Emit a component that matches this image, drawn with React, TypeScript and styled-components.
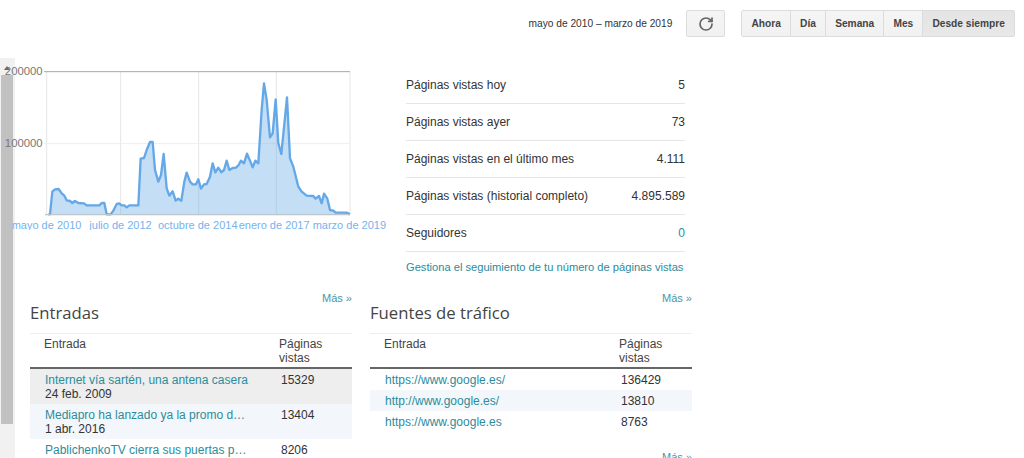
import React from 'react'
import styled, { createGlobalStyle } from 'styled-components'
import { RotateCw } from 'lucide-react'

const GlobalStyle = createGlobalStyle`
  html, body {
    margin: 0;
    padding: 0;
    background: #fff;
  }
  body {
    font-family: "Liberation Sans", Arial, sans-serif;
    font-size: 12px;
    color: #333;
  }
`

const RANGES = ['Ahora', 'Día', 'Semana', 'Mes', 'Desde siempre']

const STATS = [
  { label: 'Páginas vistas hoy', value: '5' },
  { label: 'Páginas vistas ayer', value: '73' },
  { label: 'Páginas vistas en el último mes', value: '4.111' },
  { label: 'Páginas vistas (historial completo)', value: '4.895.589' },
  { label: 'Seguidores', value: '0', link: true },
]

const POSTS = [
  { title: 'Internet vía sartén, una antena casera', date: '24 feb. 2009', views: '15329', tone: 'hover' },
  { title: 'Mediapro ha lanzado ya la promo d…', date: '1 abr. 2016', views: '13404', tone: 'alt' },
  { title: 'PablichenkoTV cierra sus puertas p…', date: '', views: '8206', tone: 'plain' },
] as const

const SOURCES = [
  { title: 'https://www.google.es/', views: '136429', tone: 'plain' },
  { title: 'http://www.google.es/', views: '13810', tone: 'alt' },
  { title: 'https://www.google.es', views: '8763', tone: 'plain' },
] as const

// traced off the graph, in a 3x coordinate space
const LINE =
  '145,493 150,493 157,425 165,418 176,417 185,430 193,437 200,451 210,453 217,459 225,453 235,459 252,460 260,466 298,466 305,459 313,459 320,493 332,493 340,482 350,462 356,460 365,466 373,466 380,472 388,466 415,466 422,326 432,324 440,300 450,276 458,276 465,360 475,395 483,375 491,312 500,415 508,437 518,424 527,452 535,446 544,452 553,395 560,368 570,395 578,403 588,403 595,388 603,416 612,403 620,402 630,380 638,340 646,367 655,353 664,367 672,360 680,332 688,360 698,354 708,353 716,345 723,332 732,340 741,311 750,332 758,352 766,332 775,340 785,180 792,100 800,150 810,262 818,250 827,148 835,280 844,312 861,142 870,325 880,350 895,410 905,425 920,437 940,438 947,446 957,438 965,460 972,431 982,446 990,480 1000,482 1007,488 1040,488 1050,493'

const X_LABELS = [
  { x: 35, text: 'mayo de 2010' },
  { x: 268, text: 'julio de 2012' },
  { x: 474, text: 'octubre de 2014' },
  { x: 716, text: 'enero de 2017' },
  { x: 938, text: 'marzo de 2019' },
]

function TrafficChart() {
  return (
    <ChartSvg viewBox="0 0 1200 540">
      {[140, 362, 596, 829, 1050].map((x) => (
        <line key={x} x1={x} x2={x} y1={65} y2={494} stroke="#e6e6e6" strokeWidth={3} />
      ))}
      <line x1={132} x2={1050} y1={281} y2={281} stroke="#eeeeee" strokeWidth={3} />
      <polygon points={`145,494 ${LINE} 1050,494`} fill="#64a8e8" fillOpacity={0.38} />
      <polyline points={LINE} fill="none" stroke="#64a8e8" strokeWidth={7} strokeLinejoin="round" />
      <line x1={132} x2={1050} y1={65} y2={65} stroke="#a8a8a8" strokeWidth={3} />
      <line x1={135} x2={1050} y1={494} y2={494} stroke="#bcc4cc" strokeWidth={4} />
      <AxisText x={128} y={76} textAnchor="end">200000</AxisText>
      <AxisText x={128} y={292} textAnchor="end">100000</AxisText>
      {X_LABELS.map((l) => (
        <DateText key={l.x} x={l.x} y={536}>
          {l.text}
        </DateText>
      ))}
    </ChartSvg>
  )
}

export default function App() {
  return (
    <Page>
      <GlobalStyle />
      <Rail>
        <RailArrow />
        <RailThumb />
      </Rail>

      <TopBar>
        <RangeText>mayo de 2010 – marzo de 2019</RangeText>
        <RefreshBtn aria-label="Actualizar">
          <RotateCw size={16} strokeWidth={2.6} color="#666" />
        </RefreshBtn>
        <BtnGroup>
          {RANGES.map((r) => (
            <RangeBtn key={r} $active={r === 'Desde siempre'}>
              {r}
            </RangeBtn>
          ))}
        </BtnGroup>
      </TopBar>

      <Overview>
        <TrafficChart />
        <Stats>
          {STATS.map((s) => (
            <StatRow key={s.label}>
              <span>{s.label}</span>
              {s.link ? <Link>{s.value}</Link> : <span>{s.value}</span>}
            </StatRow>
          ))}
          <ManageLink>Gestiona el seguimiento de tu número de páginas vistas</ManageLink>
        </Stats>
      </Overview>

      <Panels>
        <Panel>
          <MoreLink>Más »</MoreLink>
          <PanelTitle>Entradas</PanelTitle>
          <DataTable>
            <TableHead />
            <tbody>
              {POSTS.map((p) => (
                <BodyRow key={p.title} $tone={p.tone}>
                  <TitleCell>
                    <Link>{p.title}</Link>
                    {p.date && <DateLine>{p.date}</DateLine>}
                  </TitleCell>
                  <ViewsCell>{p.views}</ViewsCell>
                </BodyRow>
              ))}
            </tbody>
          </DataTable>
        </Panel>

        <Panel>
          <MoreLink>Más »</MoreLink>
          <PanelTitle>Fuentes de tráfico</PanelTitle>
          <DataTable>
            <TableHead />
            <tbody>
              {SOURCES.map((s) => (
                <BodyRow key={s.title} $tone={s.tone}>
                  <TitleCell>
                    <Link>{s.title}</Link>
                  </TitleCell>
                  <ViewsCell>{s.views}</ViewsCell>
                </BodyRow>
              ))}
            </tbody>
          </DataTable>
          <BottomMore>Más »</BottomMore>
        </Panel>
      </Panels>
    </Page>
  )
}

function TableHead() {
  return (
    <thead>
      <tr>
        <EntryHead>Entrada</EntryHead>
        <ViewsHead>
          Páginas
          <br />
          vistas
        </ViewsHead>
      </tr>
    </thead>
  )
}

const Page = styled.div`
  position: relative;
  width: 1024px;
  height: 458px;
  overflow: hidden;
  background: #fff;
`

const Rail = styled.div`
  position: absolute;
  left: 0;
  top: 58px;
  bottom: 0;
  width: 15px;
  background: #f1f1f1;
`

const RailArrow = styled.div`
  position: absolute;
  left: 4px;
  top: 8px;
  width: 0;
  height: 0;
  border-left: 3px solid transparent;
  border-right: 3px solid transparent;
  border-bottom: 4px solid #666;
`

const RailThumb = styled.div`
  position: absolute;
  left: 1px;
  top: 17px;
  width: 12px;
  height: 349px;
  background: #c1c1c1;
`

const TopBar = styled.div`
  position: relative;
  height: 50px;
  box-sizing: border-box;
  padding: 10px 9px 0 0;
  display: flex;
  justify-content: flex-end;
  align-items: flex-start;
`

const RangeText = styled.div`
  font-size: 10.2px;
  line-height: 27px;
  color: #333;
  margin-right: 14px;
`

const RefreshBtn = styled.button`
  width: 39px;
  height: 27px;
  padding: 0;
  margin-right: 16px;
  display: flex;
  align-items: center;
  justify-content: center;
  border: 1px solid #dcdcdc;
  border-radius: 2px;
  background: linear-gradient(#f5f5f5, #f1f1f1);
`

const BtnGroup = styled.div`
  display: flex;
  height: 27px;
  border: 1px solid #dcdcdc;
  border-radius: 2px;
  box-sizing: border-box;
`

const RangeBtn = styled.div<{ $active?: boolean }>`
  padding: 0 9.1px;
  font-size: 10.2px;
  font-weight: bold;
  line-height: 25px;
  color: #444;
  background: ${(p) => (p.$active ? 'linear-gradient(#e4e4e4, #e8e8e8)' : 'linear-gradient(#f5f5f5, #f1f1f1)')};
  border-left: 1px solid #dcdcdc;

  &:first-child {
    border-left: 0;
  }
`

const Overview = styled.div`
  position: relative;
  display: flex;
  align-items: flex-start;
  height: 240px;
`

const ChartSvg = styled.svg`
  display: block;
  width: 400px;
  height: 180px;
  flex: none;
`

const AxisText = styled.text`
  font-family: "Liberation Sans", Arial, sans-serif;
  font-size: 34px;
  fill: #777;
`

const DateText = styled.text`
  font-family: "Liberation Sans", Arial, sans-serif;
  font-size: 33px;
  fill: #76b2ee;
`

const Stats = styled.div`
  width: 279px;
  margin: 17px 0 0 6px;
`

const StatRow = styled.div`
  display: flex;
  justify-content: space-between;
  align-items: center;
  height: 36px;
  border-bottom: 1px solid #e6e6e6;
  color: #333;
`

const Link = styled.span`
  color: #2b8c9c;
`

const ManageLink = styled(Link)`
  display: block;
  font-size: 11.15px;
  line-height: 16px;
  margin-top: 7px;
  white-space: nowrap;
`

const Panels = styled.div`
  position: relative;
  display: flex;
  gap: 18px;
  padding-left: 30px;
`

const Panel = styled.div`
  width: 322px;
`

const MoreLink = styled(Link)`
  display: block;
  font-size: 11px;
  line-height: 16px;
  text-align: right;
  color: #4a97a5;
`

const BottomMore = styled(MoreLink)`
  margin-top: 17px;
`

const PanelTitle = styled.div`
  font-family: "Open Sans", sans-serif;
  font-size: 16.7px;
  line-height: 22px;
  color: #444;
  margin: -4px 0 9px;
`

const DataTable = styled.table`
  width: 100%;
  border-collapse: collapse;
  border-top: 1px solid #eee;
`

const EntryHead = styled.th`
  padding: 3px 0 2px 14px;
  font-weight: normal;
  text-align: left;
  vertical-align: top;
  line-height: 14px;
  color: #444;
  border-bottom: 2px solid #666;
`

const ViewsHead = styled(EntryHead)`
  width: 73px;
  padding-left: 0;
`

const BodyRow = styled.tr<{ $tone: 'plain' | 'alt' | 'hover' }>`
  background: ${(p) => (p.$tone === 'hover' ? '#eeeeee' : p.$tone === 'alt' ? '#f3f7fb' : '#fff')};
`

const TitleCell = styled.td`
  padding: 4px 0 3px 15px;
  line-height: 14px;
  vertical-align: top;
`

const DateLine = styled.div`
  color: #333;
`

const ViewsCell = styled.td`
  padding: 4px 0 3px 2px;
  line-height: 14px;
  vertical-align: top;
  color: #333;
`
